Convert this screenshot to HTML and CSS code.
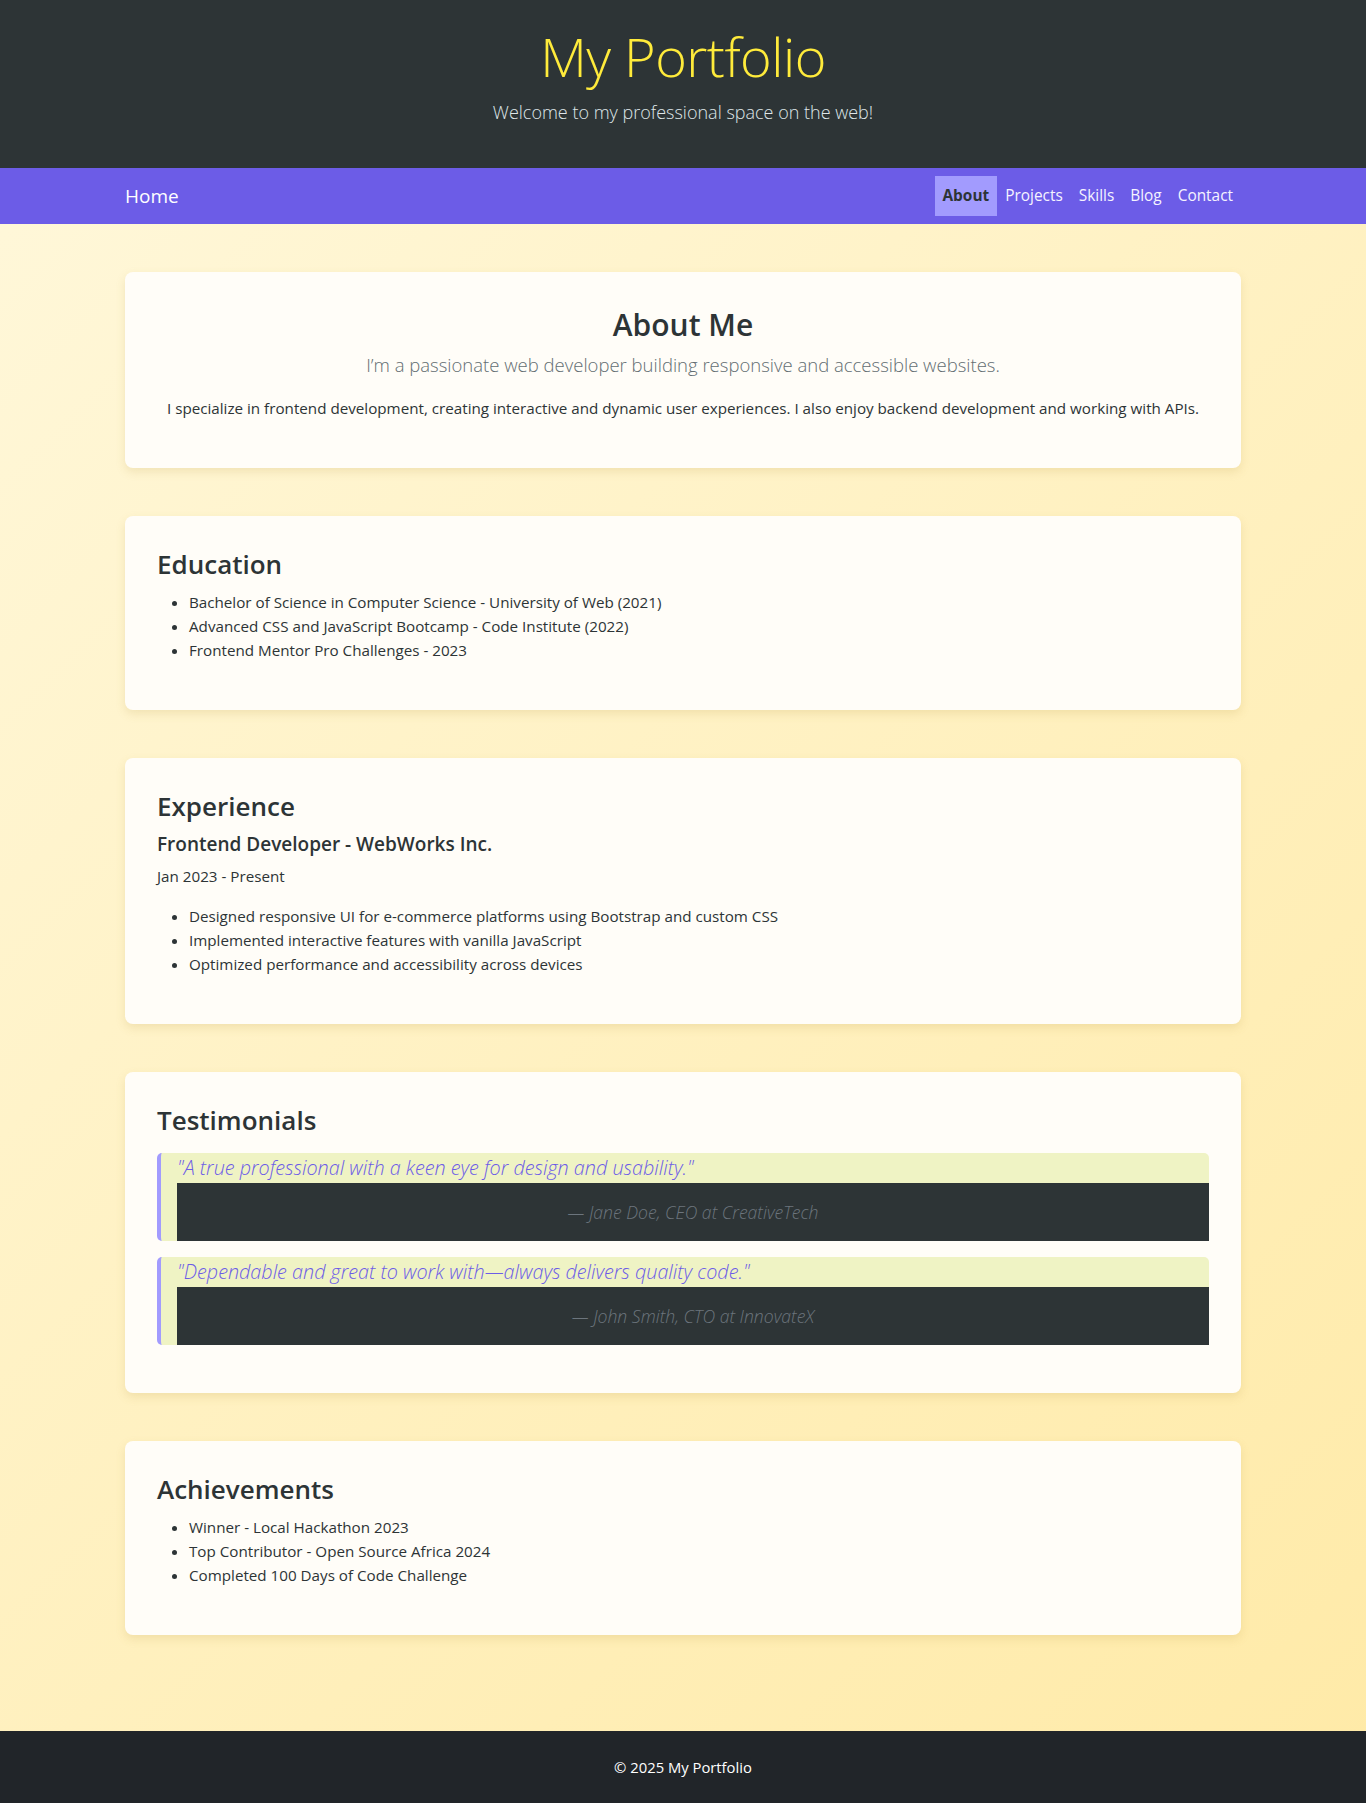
FILE: index.html
```html
<!DOCTYPE html>
<html lang="en">
<head>
<meta charset="utf-8">
<title>My Portfolio</title>
<link rel="stylesheet" href="styles.css">
</head>
<body>
<header class="site-header">
  <h1 class="site-title">My Portfolio</h1>
  <p class="site-sub">Welcome to my professional space on the web!</p>
</header>
<nav class="navbar">
  <div class="container nav-inner">
    <a class="brand" href="#">Home</a>
    <ul class="nav-links">
      <li><a class="nav-link active" href="#">About</a></li>
      <li><a class="nav-link" href="#">Projects</a></li>
      <li><a class="nav-link" href="#">Skills</a></li>
      <li><a class="nav-link" href="#">Blog</a></li>
      <li><a class="nav-link" href="#">Contact</a></li>
    </ul>
  </div>
</nav>
<main class="container main">
  <section class="card card-center">
    <h2 class="h2">About Me</h2>
    <p class="lead">I’m a passionate web developer building responsive and accessible websites.</p>
    <p class="text">I specialize in frontend development, creating interactive and dynamic user experiences. I also enjoy backend development and working with APIs.</p>
  </section>
  <section class="card">
    <h3 class="h3">Education</h3>
    <ul class="list">
      <li>Bachelor of Science in Computer Science - University of Web (2021)</li>
      <li>Advanced CSS and JavaScript Bootcamp - Code Institute (2022)</li>
      <li>Frontend Mentor Pro Challenges - 2023</li>
    </ul>
  </section>
  <section class="card">
    <h3 class="h3">Experience</h3>
    <h5 class="h5">Frontend Developer - WebWorks Inc.</h5>
    <p class="text">Jan 2023 - Present</p>
    <ul class="list">
      <li>Designed responsive UI for e-commerce platforms using Bootstrap and custom CSS</li>
      <li>Implemented interactive features with vanilla JavaScript</li>
      <li>Optimized performance and accessibility across devices</li>
    </ul>
  </section>
  <section class="card">
    <h3 class="h3 h3-spaced">Testimonials</h3>
    <blockquote class="quote">
      <p class="quote-text">"A true professional with a keen eye for design and usability."</p>
      <footer class="quote-footer">— Jane Doe, CEO at CreativeTech</footer>
    </blockquote>
    <blockquote class="quote">
      <p class="quote-text">"Dependable and great to work with—always delivers quality code."</p>
      <footer class="quote-footer">— John Smith, CTO at InnovateX</footer>
    </blockquote>
  </section>
  <section class="card">
    <h3 class="h3">Achievements</h3>
    <ul class="list">
      <li>Winner - Local Hackathon 2023</li>
      <li>Top Contributor - Open Source Africa 2024</li>
      <li>Completed 100 Days of Code Challenge</li>
    </ul>
  </section>
</main>
<footer class="site-footer">
  <p>© 2025 My Portfolio</p>
</footer>
</body>
</html>
```

FILE: styles.css
```css
* { box-sizing: border-box; }
html, body { margin: 0; padding: 0; }
body {
  font-family: "Open Sans", "Noto Sans", sans-serif;
  font-size: 16px;
  line-height: 1.5;
  color: #2d3436;
  background: linear-gradient(135deg, #fff8dc 0%, #ffeaa7 100%);
}
.container {
  width: 1140px;
  margin: 0 auto;
  padding: 0 12px;
}
.site-header {
  background: #2d3436;
  height: 168px;
  text-align: center;
  padding-top: 24px;
}
.site-title {
  margin: 0;
  font-size: 54px;
  font-weight: 300;
  line-height: 1.2;
  color: #ffeb3b;
  letter-spacing: -0.5px;
}
.site-sub {
  margin: 8px 0 0;
  font-size: 18px;
  font-weight: 300;
  line-height: 30px;
  color: #dfe6e9;
}
.navbar {
  background: #6c5ce7;
  height: 56px;
  padding: 8px 0;
}
.nav-inner {
  display: flex;
  align-items: center;
  justify-content: space-between;
  height: 40px;
}
.brand {
  color: #ffffff;
  text-decoration: none;
  font-size: 19px;
  line-height: 30px;
}
.nav-links {
  list-style: none;
  margin: 0;
  padding: 0;
  display: flex;
}
.nav-link {
  display: block;
  padding: 8px 8px;
  line-height: 24px;
  font-size: 15.4px;
  color: #f5f3ff;
  text-decoration: none;
}
.nav-link.active {
  background: #a29bfe;
  color: #2d3436;
  font-weight: 700;
}
.main {
  padding-top: 48px;
  padding-bottom: 48px;
}
.card {
  background: #fffdf8;
  border-radius: 8px;
  box-shadow: 0 4px 10px rgba(180, 150, 60, 0.18);
  padding: 32px;
  margin-bottom: 48px;
}
.card-center { text-align: center; }
.h2 {
  margin: 0 0 8px;
  font-size: 30px;
  font-weight: 600;
  line-height: 38.4px;
  padding-top: 2px;
  height: 38.4px;
}
.h3 {
  margin: 0 0 8px;
  font-size: 26px;
  font-weight: 600;
  line-height: 33.6px;
}
.h3-spaced { margin-bottom: 16px; }
.h5 {
  margin: 0 0 8px;
  font-size: 19px;
  font-weight: 600;
  line-height: 24px;
}
.lead {
  margin: 0 0 16px;
  font-size: 18.5px;
  font-weight: 300;
  line-height: 30px;
  color: #636e72;
}
.text {
  margin: 0 0 16px;
  font-size: 15.2px;
  line-height: 24px;
}
.list {
  margin: 0 0 16px;
  padding-left: 32px;
  font-size: 15.2px;
  line-height: 24px;
}
.quote {
  margin: 0 0 16px;
  padding-left: 16px;
  border-left: 4px solid #a29bfe;
  border-radius: 5px;
  background: #eff3c4;
}
.quote-text {
  margin: 0;
  font-size: 19.8px;
  line-height: 30px;
  font-style: italic;
  font-weight: 300;
  color: #6c5ce7;
}
.quote-footer {
  background: #2d3436;
  color: #6c757d;
  text-align: center;
  font-style: italic;
  font-weight: 300;
  font-size: 17.6px;
  line-height: 26px;
  padding: 16px 0;
}
.site-footer {
  background: #212529;
  color: #ffffff;
  text-align: center;
  padding: 24px 0;
}
.site-footer p {
  margin: 0;
  font-size: 14.8px;
  line-height: 24px;
}
```
